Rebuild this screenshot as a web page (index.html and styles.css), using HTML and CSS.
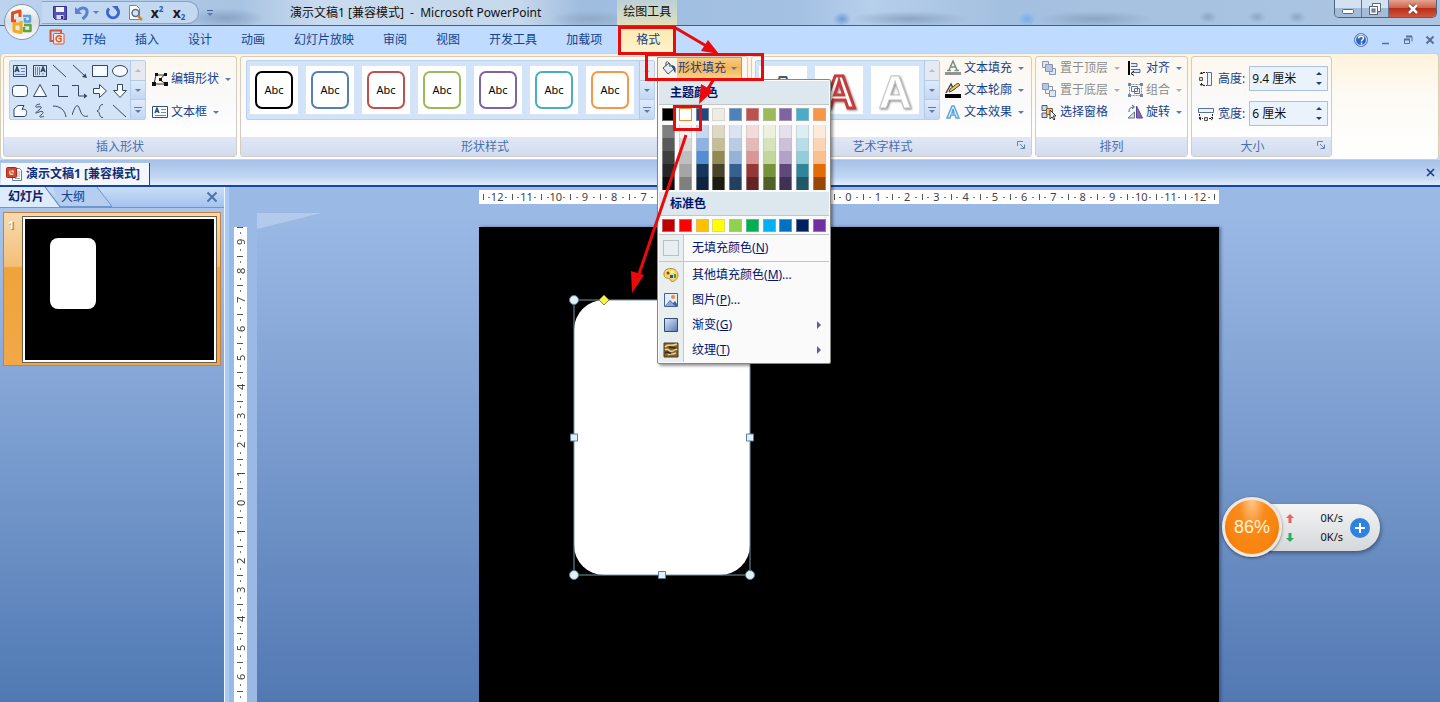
FILE: index.html
```html
<!DOCTYPE html>
<html lang="zh-CN">
<head>
    <meta charset="UTF-8">
    <meta name="viewport" content="width=device-width, initial-scale=1.0">
    <title>演示文稿1 [兼容模式] - Microsoft PowerPoint</title>
    <link rel="stylesheet" href="styles.css">
</head>
<body>
    <header class="titlebar">
        <button class="office-btn" aria-label="Office">
            <svg width="38" height="38" viewBox="0 0 38 38">
                <defs>
                    <linearGradient id="orb" x1="0" y1="0" x2="0" y2="1"><stop offset="0" stop-color="#fff"/><stop offset=".5" stop-color="#d9dee6"/><stop offset="1" stop-color="#fbfcfd"/></linearGradient>
                </defs>
                <circle cx="19" cy="19" r="17.500" fill="url(#orb)" stroke="#8793a8"/>
                <g fill="none" stroke-width="3" stroke-linejoin="round">
                    <path d="M13 18H9.500V10l7.500-2v6" stroke="#e2501a"/>
                    <path d="M20 13h7v5.500h-5V15" stroke="#5b9fdc" stroke-width="2.500"/>
                    <path d="M18 21h-7v7l7 1.500V18" stroke="#f0ac1c"/>
                    <path d="M21 22h6.500v6H21v-4" stroke="#5fa53a" stroke-width="2.500"/>
                </g>
            </svg>
        </button>
        <div class="quick-access">
            <button aria-label="保存"><svg width="16" height="16" viewBox="0 0 16 16"><path d="M1.500 1.500h13v13h-11l-2-2z" fill="#5650b8" stroke="#35308c"/><path d="M4 2h8v5H4z" fill="#f2f4ff"/><path d="M4.500 10h7v4.500h-7z" fill="#d5dcf4"/><path d="M9 11h2v3H9z" fill="#35308c"/></svg></button>
            <button class="undo" aria-label="撤销"><svg width="16" height="16" viewBox="0 0 16 16"><path d="M4 5.500C8 1 14 3 13 8c-.5 3-2.500 4.500-4.500 6" fill="none" stroke="#5c80d4" stroke-width="3"/><path d="M1 2v7h7z" fill="#5c80d4"/></svg><i class="caret"></i></button>
            <button aria-label="重复"><svg width="16" height="16" viewBox="0 0 16 16"><path d="M4 3.500a5.500 5.500 0 1 0 8 0" fill="none" stroke="#3a67cc" stroke-width="3"/><path d="M7 1h6v6z" fill="#3a67cc"/></svg></button>
            <button aria-label="打印预览"><svg width="16" height="16" viewBox="0 0 16 16"><path d="M2.500.500h7l3 3v11h-10z" fill="#fff" stroke="#7b8694"/><circle cx="8.500" cy="8" r="3.500" fill="#cde5f8" stroke="#5b6b7c" stroke-width="1.500"/><path d="M11 11l4 4" stroke="#c98a2c" stroke-width="2.500"/></svg></button>
            <button class="script-btn">x<sup>2</sup></button>
            <button class="script-btn">x<sub>2</sub></button>
        </div>
        <button class="qat-more" aria-label="自定义快速访问工具栏"><i class="caret"></i></button>
        <h1>演示文稿1 [兼容模式] &nbsp;-&nbsp; Microsoft PowerPoint</h1>
        <span class="context-title">绘图工具</span>
        <div class="window-controls">
            <button aria-label="最小化"><svg width="14" height="12" viewBox="0 0 14 12"><rect x="1.500" y="6.500" width="11" height="4" rx="1" fill="#fff" stroke="#5b6678"/></svg></button>
            <button aria-label="还原"><svg width="14" height="12" viewBox="0 0 14 12"><path d="M4.500.500h8v8h-8z" fill="#fff" stroke="#5b6678"/><rect x="1.500" y="3.500" width="8" height="8" fill="#fff" stroke="#5b6678"/><rect x="4" y="6" width="3" height="3" fill="#8a9bb2" stroke="#5b6678"/></svg></button>
            <button class="close" aria-label="关闭"><svg width="14" height="12" viewBox="0 0 14 12"><path d="M3 2l8 8M11 2l-8 8" stroke="#7a3129" stroke-width="4"/><path d="M3 2l8 8M11 2l-8 8" stroke="#fff" stroke-width="2.500"/></svg></button>
        </div>
    </header>

    <nav class="tabs">
        <svg class="ppt-icon" width="16" height="16" viewBox="0 0 16 16"><path d="M1 1.500h11v3M1.500 1v11h3" fill="none" stroke="#d9572f" stroke-width="2"/><rect x="4.500" y="4.500" width="10.500" height="10.500" rx="1" fill="#fbe6de" stroke="#d9572f"/><path d="M12.500 8A3 3 0 1 0 12 12V9.500H9.500" fill="none" stroke="#d9572f" stroke-width="1.500"/></svg>
        <a href="#">开始</a>
        <a href="#">插入</a>
        <a href="#">设计</a>
        <a href="#">动画</a>
        <a href="#">幻灯片放映</a>
        <a href="#">审阅</a>
        <a href="#">视图</a>
        <a href="#">开发工具</a>
        <a href="#">加载项</a>
        <a href="#" class="active">格式</a>
        <div class="tab-tools">
            <button aria-label="帮助"><svg width="16" height="16" viewBox="0 0 16 16"><circle cx="8" cy="8" r="6.500" fill="#2c66c4" stroke="#5f7fb6"/><circle cx="8" cy="8" r="5.500" fill="none" stroke="#dce9fb"/><path d="M5.500 6.500C5.500 3.500 10.500 3.500 10.500 6c0 1.500-2 1.500-2 3.500M8.500 10.500v2" fill="none" stroke="#fff" stroke-width="1.500"/></svg></button>
            <button aria-label="最小化文档"><svg width="10" height="10" viewBox="0 0 10 10"><path d="M1 8.500h7" stroke="#5a6f92" stroke-width="1.500"/></svg></button>
            <button aria-label="还原文档"><svg width="10" height="10" viewBox="0 0 10 10"><path d="M3 1.500h6v5M1.500 4.500h5v4h-5z" fill="none" stroke="#5a6f92"/><path d="M3 1.500h6M1 4.500h6" stroke="#5a6f92" stroke-width="2"/></svg></button>
            <button aria-label="关闭文档"><svg width="10" height="10" viewBox="0 0 10 10"><path d="M1.500 1.500l7 7M8.500 1.500l-7 7" stroke="#5a6f92" stroke-width="2"/></svg></button>
        </div>
    </nav>

    <section class="ribbon">
        <div class="group insert-shapes">
            <div class="group-body">
                <div class="gallery">
                    <div class="shape-grid">
                        <button aria-label="文本框"><svg viewBox="0 0 16 16"><path d="M1.500 2.500h13v11h-13z"/><path d="M3 9l2-5 2 5M4 7.500h2" stroke-width="1.500"/><path d="M9 5.500h4M9 8.500h4M3 11.500h10" class="soft"/></svg></button>
                        <button aria-label="竖排文本框"><svg viewBox="0 0 16 16"><path d="M1.500 2.500h13v11h-13z"/><path d="M9 9l2-5 2 5M10 7.500h2" stroke-width="1.500"/><path d="M3.500 4v8M5.500 4v8M7.500 4v8M11 10v2" class="soft"/></svg></button>
                        <button aria-label="直线"><svg viewBox="0 0 16 16"><path d="M1 2l13 12"/></svg></button>
                        <button aria-label="箭头"><svg viewBox="0 0 16 16"><path d="M1 2l13 12"/><path d="M15 15l-1.500-4.500L10 14z" class="solid"/></svg></button>
                        <button aria-label="矩形"><svg viewBox="0 0 16 16"><path d="M.500 2.500h15v11H.500z" class="fill"/></svg></button>
                        <button aria-label="椭圆"><svg viewBox="0 0 16 16"><ellipse cx="8" cy="8" rx="7.500" ry="5.500" class="fill"/></svg></button>
                        <button aria-label="圆角矩形"><svg viewBox="0 0 16 16"><rect x=".5" y="2.500" width="15" height="11" rx="3" class="fill"/></svg></button>
                        <button aria-label="三角形"><svg viewBox="0 0 16 16"><path d="M8 1.500l6.500 12h-13z" class="fill"/></svg></button>
                        <button aria-label="肘形连接符"><svg viewBox="0 0 16 16"><path d="M0 2.500h6.500v11H16"/></svg></button>
                        <button aria-label="肘形箭头"><svg viewBox="0 0 16 16"><path d="M0 2.500h6.500v10.500H13"/><path d="M12 10.500l3.500 2.500-3.500 2.500z" class="solid"/></svg></button>
                        <button aria-label="右箭头"><svg viewBox="0 0 16 16"><path d="M1.500 5.500h6v-4l7 6.500-7 6.500v-4h-6z" class="fill"/></svg></button>
                        <button aria-label="下箭头"><svg viewBox="0 0 16 16"><path d="M5.500 1.500v6h-4l6.500 7 6.500-7h-4v-6z" class="fill"/></svg></button>
                        <button aria-label="任意多边形"><svg viewBox="0 0 16 16"><path d="M2 13.500V6l4-3.500h6l-2 4c4-1 5 1 4.500 4S13 13.500 12 13.500z" class="fill"/></svg></button>
                        <button aria-label="自由曲线"><svg viewBox="0 0 16 16"><path d="M8 1C2 2 3 5 6 4s5 0 1 3-5 4 0 2 5 1 2 3 0 3 3 1"/></svg></button>
                        <button aria-label="弧形"><svg viewBox="0 0 16 16"><path d="M1 3c7 0 12 4 13 11"/></svg></button>
                        <button aria-label="曲线"><svg viewBox="0 0 16 16"><path d="M0 12C4 0 6 1 8 7s4 7 8 6"/></svg></button>
                        <button aria-label="左大括号"><svg viewBox="0 0 16 16"><path d="M11 1.500C6 1.500 9 7 5 8c4 1 1 6.500 6 6.500"/></svg></button>
                        <button aria-label="线条"><svg viewBox="0 0 16 16"><path d="M1 2l13 12"/></svg></button>
                    </div>
                    <div class="scroller"><button disabled aria-label="上一行"><i class="caret up"></i></button><button aria-label="下一行"><i class="caret"></i></button><button class="more" aria-label="其他"><i class="caret"></i></button></div>
                </div>
                <div class="commands loose">
                    <button class="cmd"><svg width="16" height="16" viewBox="0 0 16 16"><path d="M4 4h8L8 9l6 4H2z" fill="none" stroke="#333"/><path d="M3 2h3v3H3zM12 2h3v3h-3zM7 7h3v3H7zM0 11h4v4H0zM12 11h4v4h-4z" fill="#111"/></svg>编辑形状<i class="caret"></i></button>
                    <button class="cmd"><svg width="16" height="16" viewBox="0 0 16 16" fill="none" stroke="#33507c"><path d="M.500 2.500h15v11H.500z" fill="#fff"/><path d="M3 9l2-5 2 5M4 7.500h2" stroke-width="1.500"/><path d="M9 5.500h5M9 8.500h5M3 11.500h11" stroke="#6d87ae"/></svg>文本框<i class="caret"></i></button>
                </div>
            </div>
            <h2>插入形状</h2>
        </div>

        <div class="group shape-styles">
            <div class="group-body">
                <div class="gallery">
                    <div class="style-list">
                        <button class="style-item black">Abc</button>
                        <button class="style-item blue">Abc</button>
                        <button class="style-item red">Abc</button>
                        <button class="style-item green">Abc</button>
                        <button class="style-item purple">Abc</button>
                        <button class="style-item aqua">Abc</button>
                        <button class="style-item orange">Abc</button>
                    </div>
                    <div class="scroller"><button disabled aria-label="上一行"><i class="caret up"></i></button><button aria-label="下一行"><i class="caret"></i></button><button class="more" aria-label="其他"><i class="caret"></i></button></div>
                </div>
                <div class="fill-drop">
                    <button class="fill-btn">
                        <svg width="16" height="16" viewBox="0 0 16 16"><path d="M2 8l6-5 5 6-6 5z" fill="#e7edf5" stroke="#44546c"/><path d="M5 6c-1-6 3-6 4 1" fill="none" stroke="#44546c"/><path d="M10 5c5 0 5 4 4.500 8-2-1-1.500-4-3-5z" fill="#2c5088"/></svg>
                        <span>形状填充<i class="caret"></i></span>
                    </button>
                    <div class="color-menu">
                        <h3>主题颜色</h3>
                        <div class="theme-colors">
                            <div class="tone t-black"><button></button><button></button><button></button><button></button><button></button><button></button></div>
                            <div class="tone t-white"><button></button><button></button><button></button><button></button><button></button><button></button></div>
                            <div class="tone t-navy"><button></button><button></button><button></button><button></button><button></button><button></button></div>
                            <div class="tone t-tan"><button></button><button></button><button></button><button></button><button></button><button></button></div>
                            <div class="tone t-blue"><button></button><button></button><button></button><button></button><button></button><button></button></div>
                            <div class="tone t-red"><button></button><button></button><button></button><button></button><button></button><button></button></div>
                            <div class="tone t-green"><button></button><button></button><button></button><button></button><button></button><button></button></div>
                            <div class="tone t-purple"><button></button><button></button><button></button><button></button><button></button><button></button></div>
                            <div class="tone t-aqua"><button></button><button></button><button></button><button></button><button></button><button></button></div>
                            <div class="tone t-orange"><button></button><button></button><button></button><button></button><button></button><button></button></div>
                        </div>
                        <h3>标准色</h3>
                        <div class="standard-colors"><button></button><button></button><button></button><button></button><button></button><button></button><button></button><button></button><button></button><button></button></div>
                        <div class="menu-items">
                            <button class="menu-item no-fill"><i class="empty-box"></i><span>无填充颜色(<u>N</u>)</span></button>
                            <button class="menu-item"><svg width="16" height="16" viewBox="0 0 16 16"><path d="M8 1.500c4 0 7 3 7 6.500S12 14.500 9 14.500c-2 0-1-3-3-3S1 11 1 7s3-5.500 7-5.500z" fill="#f7d768" stroke="#b88a2a"/><circle cx="5" cy="6" r="1.500" fill="#7b4c20"/><circle cx="9" cy="5" r="1.500" fill="#fff6c8"/><path d="M7 8h3v3H7z" fill="#2a52b0"/><path d="M11 7h2v4h-2z" fill="#3a9a3d"/></svg><span>其他填充颜色(<u>M</u>)...</span></button>
                            <button class="menu-item"><svg width="16" height="16" viewBox="0 0 16 16"><path d="M1.500 1.500h13v13h-13z" fill="#e4eefb" stroke="#46638f"/><path d="M2 14l5-6 3 3 2-2 2 3v2z" fill="#41659c"/><path d="M2 14l5-5 5 5z" fill="#8aa9d6"/><circle cx="10" cy="5" r="2" fill="#f08a3c"/></svg><span>图片(<u>P</u>)...</span></button>
                            <button class="menu-item"><svg width="16" height="16" viewBox="0 0 16 16"><defs><linearGradient id="grad" x1="0" y1="0" x2="1" y2="1"><stop offset="0" stop-color="#dcecff"/><stop offset="1" stop-color="#5877b0"/></linearGradient></defs><path d="M1.500 1.500h13v13h-13z" fill="url(#grad)" stroke="#34496f"/></svg><span>渐变(<u>G</u>)</span><i class="sub-arrow"></i></button>
                            <button class="menu-item"><svg width="16" height="16" viewBox="0 0 16 16"><path d="M1 1h14v14H1z" fill="#85632f" stroke="#4a3b24"/><path d="M2 5c3-4 6 0 12-3M2 8c3-3 5 3 8 1s3-2 4-1M5 13c2-2 4 0 8-2" fill="none" stroke="#e8d39a" stroke-width="1.500"/><path d="M2 11c3-3 4 1 6 0M6 5c2 1 5 0 7 1" fill="none" stroke="#3b2b16" stroke-width="1.500"/></svg><span>纹理(<u>T</u>)</span><i class="sub-arrow"></i></button>
                        </div>
                    </div>
                </div>
            </div>
            <h2>形状样式</h2>
        </div>

        <div class="group wordart">
            <div class="group-body">
                <div class="gallery">
                    <div class="style-list">
                        <button class="art-item"><svg width="48" height="48"><text x="24" y="38" class="art a-dark">A</text></svg></button>
                        <button class="art-item"><svg width="48" height="48"><text x="24" y="42" class="art a-red">A</text></svg></button>
                        <button class="art-item"><svg width="48" height="48"><text x="24" y="42" class="art a-white">A</text></svg></button>
                    </div>
                    <div class="scroller"><button disabled aria-label="上一行"><i class="caret up"></i></button><button aria-label="下一行"><i class="caret"></i></button><button class="more" aria-label="其他"><i class="caret"></i></button></div>
                </div>
                <div class="commands">
                    <button class="cmd"><svg width="16" height="16" viewBox="0 0 16 16"><path d="M4 10L8 1l4 9M5.500 7h5M2 10.500h4M9.500 10.500H14" fill="none" stroke="#7e8c87" stroke-width="1.500"/><path d="M0 12h16v3H0z" fill="#929292"/></svg>文本填充<i class="caret"></i></button>
                    <button class="cmd"><svg width="16" height="16" viewBox="0 0 16 16"><path d="M1 11l5-9 3 6" fill="none" stroke="#444" stroke-width="1.500"/><path d="M4 10l1-3 8-6 2 2-8 6z" fill="#e9c469" stroke="#5c4926"/><path d="M0 12h16v4H0z" fill="#000"/></svg>文本轮廓<i class="caret"></i></button>
                    <button class="cmd"><svg width="16" height="16" viewBox="0 0 16 16"><path d="M2 14L7 2h2l5 12h-3l-1-3H6l-1 3zM7 9h2L8 5z" fill="#e9f5ff" stroke="#5da3df" stroke-width="1.500"/></svg>文本效果<i class="caret"></i></button>
                </div>
            </div>
            <h2>艺术字样式</h2>
            <button class="launcher" aria-label="艺术字样式选项"><svg width="10" height="10" viewBox="0 0 10 10"><path d="M1.500 6V1.500H7M4 4l4 4M8.500 4.500v4h-4" fill="none" stroke="#6682a8"/></svg></button>
        </div>

        <div class="group arrange">
            <div class="group-body">
                <div class="commands">
                    <button class="cmd" disabled><svg width="16" height="16" viewBox="0 0 16 16" stroke="#8995b0"><path d="M1.500 1.500h6v6h-6z" fill="#dfe5f1"/><path d="M8.500 8.500h6v6h-6z" fill="#dfe5f1"/><path d="M4.500 4.500h7v7h-7z" fill="#b5c6e6"/></svg>置于顶层<i class="caret"></i></button>
                    <button class="cmd" disabled><svg width="16" height="16" viewBox="0 0 16 16" stroke="#8995b0"><path d="M4.500 4.500h7v7h-7z" fill="#eef1f7"/><path d="M1.500 1.500h6v6h-6z" fill="#b5c6e6"/><path d="M8.500 8.500h6v6h-6z" fill="#dfe5f1"/></svg>置于底层<i class="caret"></i></button>
                    <button class="cmd"><svg width="16" height="16" viewBox="0 0 16 16"><path d="M1 1.500h5v5H1zM1 9h5v4.500H1z" fill="#cfd9ea" stroke="#4a5a74"/><path d="M5.500 4.500h6v6h-6z" fill="#f2c76c" stroke="#7d6332"/><path d="M9 6l6 6h-3l2 3-1 1-2-3-2 2z" fill="#fff" stroke="#333"/></svg>选择窗格</button>
                </div>
                <div class="commands">
                    <button class="cmd"><svg width="16" height="16" viewBox="0 0 16 16"><path d="M2 1v14" stroke="#000" stroke-width="2"/><path d="M4 3.500h6v3H4M4 9.500h9v3H6" fill="#dce6f5" stroke="#516c96"/><path d="M7 11l-3 2.500 3 2" fill="none" stroke="#000"/></svg>对齐<i class="caret"></i></button>
                    <button class="cmd" disabled><svg width="16" height="16" viewBox="0 0 16 16"><path d="M2.500 2.500h12v11h-12z" fill="none" stroke="#8090a8" stroke-dasharray="2 1"/><path d="M4.500 4.500h6v5h-6zM7.500 6.500h5v5h-5z" fill="none" stroke="#63758f"/><path d="M1 1h3v3H1zM13 1h3v3h-3zM1 12h3v3H1zM13 12h3v3h-3z" fill="#74859e"/></svg>组合<i class="caret"></i></button>
                    <button class="cmd"><svg width="16" height="16" viewBox="0 0 16 16"><path d="M9.500 14V2l6 12z" fill="#8069b5" stroke="#5a478d"/><path d="M7.500 14V8L1 14z" fill="#dce1ec" stroke="#66708a"/><path d="M2 8c0-4 2-5 5-5M5 1l2.500 2L5 5" fill="none" stroke="#3e62a0"/></svg>旋转<i class="caret"></i></button>
                </div>
            </div>
            <h2>排列</h2>
        </div>

        <div class="group size">
            <div class="group-body">
                <div class="size-row">
                    <svg width="16" height="16" viewBox="0 0 16 16"><path d="M9.500 1.500h4v13h-4z" fill="#edf3fb" stroke="#5b7096"/><path d="M3.500 1v3M2 3l1.500-2L5 3M3.500 12v3M2 13l1.500 2L5 13M5 1.500h4M5 14.500h4" fill="none" stroke="#222" stroke-dasharray="2 1"/><path d="M1.500 6.500h3v3h-3z" fill="#d7dce4" stroke="#555"/></svg>
                    <label for="shape-height">高度:</label>
                    <div class="spin"><input id="shape-height" type="text" value="9.4 厘米"><div><button aria-label="增加高度"><i class="caret up"></i></button><button aria-label="减小高度"><i class="caret"></i></button></div></div>
                </div>
                <div class="size-row">
                    <svg width="16" height="16" viewBox="0 0 16 16"><path d="M.500 2.500h15v4H.500z" fill="#edf3fb" stroke="#5b7096"/><path d="M1.500 8v6M14.500 8v6M1 12.500h4M3 11l-2 1.500L3 14M11 12.500h4M13 11l2 1.500-2 1.500" fill="none" stroke="#222" stroke-dasharray="2 1"/><path d="M6.500 11.500h3v3h-3z" fill="#d7dce4" stroke="#555"/></svg>
                    <label for="shape-width">宽度:</label>
                    <div class="spin"><input id="shape-width" type="text" value="6 厘米"><div><button aria-label="增加宽度"><i class="caret up"></i></button><button aria-label="减小宽度"><i class="caret"></i></button></div></div>
                </div>
            </div>
            <h2>大小</h2>
            <button class="launcher" aria-label="大小选项"><svg width="10" height="10" viewBox="0 0 10 10"><path d="M1.500 6V1.500H7M4 4l4 4M8.500 4.500v4h-4" fill="none" stroke="#6682a8"/></svg></button>
        </div>
    </section>

    <div class="doc-bar">
        <a href="#" class="doc-tab">
            <svg width="16" height="16" viewBox="0 0 16 16"><path d="M6.500 2.500h7l2 2v10h-9z" fill="#fff" stroke="#6a7f9f"/><path d="M11 6h3M11 8h3M11 10h3M9 12.500h5" stroke="#8aa"/><rect x=".5" y="1.500" width="10" height="10" rx="1" fill="#d4442c" stroke="#a02d1c"/><rect x="3" y="4" width="5" height="5" rx="2" fill="#f6d5cd"/><path d="M5 4v3h3" fill="none" stroke="#c03a25"/></svg>
            演示文稿1 [兼容模式]
        </a>
        <button class="doc-close" aria-label="关闭"><svg width="9" height="9" viewBox="0 0 9 9"><path d="M1 1l7 7M8 1L1 8" stroke="#123a86" stroke-width="1.500"/></svg></button>
    </div>

    <main class="workspace">
        <aside class="slides-panel">
            <div class="panel-tabs">
                <svg class="tab-shape" width="112" height="20" viewBox="0 0 112 20"><path d="M53 0h44l15 19.500H60z" fill="#b5cef0"/><path d="M97 0l15 19.500H60L45 0" fill="none" stroke="#6f95cd"/><path d="M0 0h45l15 20H0z" fill="#dcebfd"/><path d="M45 0l15 20" stroke="#5f86c2"/></svg>
                <button class="current">幻灯片</button>
                <button>大纲</button>
                <button class="panel-close" aria-label="关闭窗格"><svg width="12" height="12" viewBox="0 0 12 12"><path d="M1.500 1.500l9 9M10.500 1.500l-9 9" stroke="#4d73ad" stroke-width="2"/></svg></button>
            </div>
            <div class="thumb-item">
                <span>1</span>
                <div class="thumb"><div class="thumb-shape"></div></div>
            </div>
        </aside>
        <div class="splitter"></div>
        <div class="editor">
            <div class="h-ruler"><span>12</span><span>11</span><span>10</span><span>9</span><span>8</span><span>7</span><span>6</span><span>5</span><span>4</span><span>3</span><span>2</span><span>1</span><span>0</span><span>1</span><span>2</span><span>3</span><span>4</span><span>5</span><span>6</span><span>7</span><span>8</span><span>9</span><span>10</span><span>11</span><span>12</span></div>
            <div class="v-ruler"><span>9</span><span>8</span><span>7</span><span>6</span><span>5</span><span>4</span><span>3</span><span>2</span><span>1</span><span>0</span><span>1</span><span>2</span><span>3</span><span>4</span><span>5</span><span>6</span><span class="blank"></span></div>
            <div class="stage">
                <svg class="corner" width="64" height="16" viewBox="0 0 64 16"><path d="M0 0h64L0 16z" fill="#b3caec"/></svg>
                <div class="slide">
                    <div class="shape">
                        <svg width="188" height="288" viewBox="-6 -6 188 288">
                            <path d="M0 0h176v275H0z" fill="none" stroke="#7797ad"/>
                            <g fill="#dff1f5" stroke="#5d7f92">
                                <circle cx="0" cy="0" r="4.500"/><circle cx="176" cy="0" r="4.500"/><circle cx="0" cy="275" r="4.500"/><circle cx="176" cy="275" r="4.500"/>
                                <path d="M-3.500 134h7v7h-7zM172.500 134h7v7h-7zM84.500 271.500h7v7h-7zM84.500-3.500h7v7h-7z"/>
                            </g>
                            <path d="M30-5l5 5-5 5-5-5z" fill="#f8f04e" stroke="#8c8530"/>
                        </svg>
                    </div>
                </div>
            </div>
        </div>
    </main>

    <div class="net-widget">
        <div class="percent">86%</div>
        <div class="rates">
            <p><svg width="8" height="9" viewBox="0 0 8 9"><path d="M4 0l4 4H5.500v5h-3V4H0z" fill="#e8635a"/></svg>0K/s</p>
            <p><svg width="8" height="9" viewBox="0 0 8 9"><path d="M4 9l4-4H5.500V0h-3v5H0z" fill="#2fae5a"/></svg>0K/s</p>
        </div>
        <button aria-label="展开"><svg width="20" height="20" viewBox="0 0 20 20"><circle cx="10" cy="10" r="10" fill="#2f83e0"/><path d="M10 5v10M5 10h10" stroke="#fff" stroke-width="2"/></svg></button>
    </div>

    <!-- step-by-step hints -->
    <svg class="hints" width="800" height="310" viewBox="0 0 800 310">
        <g fill="none" stroke="#e90b0b" stroke-width="3">
            <path d="M619.500 27.500h55v26h-55z"/>
            <path d="M646.500 54.500h116v25h-116z"/>
            <path d="M674.500 106.500h26v23h-26z"/>
            <path d="M674 27l34 20M714 79l-7 11M686 135l-49 145"/>
        </g>
        <path d="M719 54l-18-3 7-11zM699 104l2-20 12 7zM632 293l-1-22 13 4z" fill="#e90b0b"/>
    </svg>
</body>
</html>
```

FILE: styles.css
```css
* {
    box-sizing: border-box;
}
body {
    margin: 0;
    height: 100vh;
    display: flex;
    flex-direction: column;
    position: relative;
    overflow: hidden;
    font-family: "Noto Sans", "Noto Sans CJK SC", sans-serif;
    font-size: 12px;
    line-height: 16px;
    color: #15428b;
    background: #bfdbff;
}
h1, h2, h3, p {
    margin: 0;
    font-size: 12px;
    font-weight: normal;
}
button {
    display: flex;
    align-items: center;
    justify-content: center;
    padding: 0;
    border: none;
    background: none;
    font: inherit;
    color: inherit;
}
svg {
    display: block;
    flex: none;
}
a {
    color: inherit;
    text-decoration: none;
}
.caret {
    flex: none;
    border: 3px solid transparent;
    border-top-color: #5b7cad;
    border-bottom: none;
}
.caret.up {
    border-top: none;
    border-bottom: 3px solid #5b7cad;
}

/* title bar */
.titlebar {
    flex: none;
    height: 26px;
    display: flex;
    align-items: center;
    padding-left: 42px;
    border-bottom: 1px solid #46617f;
    background:
        radial-gradient(ellipse 9px 7px at 842px 19px, #6d9bd6, transparent),
        radial-gradient(ellipse 60px 8px at 910px 19px, #8ba5c4, transparent),
        radial-gradient(ellipse 9px 7px at 1027px 19px, #74aeee, transparent),
        radial-gradient(ellipse 60px 8px at 1095px 19px, #8ba5c4, transparent),
        radial-gradient(ellipse 9px 6px at 1208px 17px, #8ba5c4, transparent),
        radial-gradient(ellipse 9px 6px at 1257px 17px, #8ba5c4, transparent),
        radial-gradient(ellipse 9px 6px at 1297px 17px, #8ba5c4, transparent),
        radial-gradient(ellipse 40px 10px at 225px 18px, #87a3c6, transparent),
        radial-gradient(ellipse 40px 8px at 590px 19px, #90a9c6, transparent),
        linear-gradient(90deg, #bdd3ee 0, #a8c3e2 240px, #c9dbee 320px, #c6d8ec 520px, #9fbddf 580px, #a4c1e3 800px, #b6cfeb 870px, #a4c0e0 1000px, #abc5e2 100%);
}
.office-btn {
    position: absolute;
    left: 3px;
    top: 3px;
    z-index: 2;
}
.quick-access {
    display: flex;
    align-items: center;
    gap: 6px;
    height: 23px;
    padding: 0 11px 0 10px;
    border: 1px solid #8ba3c6;
    border-left: none;
    border-radius: 0 12px 12px 0;
    background: #c3d8f1;
}
.quick-access .undo {
    gap: 3px;
}
.script-btn {
    width: 16px;
    font-weight: bold;
    font-size: 14px;
    color: #1b1b1b;
}
.script-btn sup, .script-btn sub {
    font-size: 8px;
    line-height: 8px;
    color: #2e5aa8;
}
.script-btn sup {
    align-self: flex-start;
}
.script-btn sub {
    align-self: flex-end;
}
.qat-more {
    margin-left: 8px;
    padding-top: 2px;
    border-top: 1px solid #3d5f92;
}
.titlebar h1 {
    margin-left: 77px;
    color: #111;
    white-space: nowrap;
}
.context-title {
    margin-left: 76px;
    padding: 4px 6px 5px;
    color: #111;
    background: linear-gradient(#bdd0d8, #e0e0b8);
    white-space: nowrap;
}
.window-controls {
    display: flex;
    align-self: flex-start;
    margin-left: auto;
    margin-right: 3px;
    border: 1px solid #4d6384;
    border-top: none;
    border-radius: 0 0 5px 5px;
    overflow: hidden;
}
.window-controls button {
    width: 27px;
    height: 17px;
    border-right: 1px solid #5f7697;
    background: linear-gradient(#d3e1f1 50%, #a4bcd8 50%);
}
.window-controls .close {
    width: 47px;
    border-right: none;
    background: linear-gradient(#e3a493, #cf5c44 50%, #b9301a 50%, #d2553a);
}

/* tab row */
.tabs {
    flex: none;
    height: 27px;
    display: flex;
    align-items: center;
    gap: 1px;
    padding: 0 5px 0 49px;
    background: #bfdbff;
}
.tabs a {
    padding: 5px 14px;
    white-space: nowrap;
}
.ppt-icon {
    align-self: flex-start;
    margin: 3px 2px 0 0;
}
.tabs .active {
    margin-left: 4px;
    padding: 5px 15px;
    border-radius: 3px 3px 0 0;
    background: linear-gradient(#fbe9ae, #fdf3cf);
}
.tab-tools {
    display: flex;
    align-items: center;
    gap: 12px;
    margin-left: auto;
}

/* ribbon */
.ribbon {
    flex: none;
    display: flex;
    gap: 3px;
    margin-right: 1px;
    padding: 2px;
    border: 1px solid #d8cfb5;
    border-radius: 4px;
    background: linear-gradient(#fff3dc, #fdfaf5 40%, #fff);
}
.group {
    position: relative;
    display: flex;
    flex-direction: column;
    border: 1px solid #d2cdc0;
    border-radius: 3px;
    background: linear-gradient(#fdf8ee, #fafafc 50%, #fff 80%);
}
.group-body {
    flex: 1;
    display: flex;
    align-items: flex-start;
    min-height: 80px;
    padding: 3px 5px 0;
}
.group h2 {
    height: 19px;
    line-height: 19px;
    text-align: center;
    color: #4a70aa;
    background: linear-gradient(#e1e7f4, #d2dcf0);
}
.insert-shapes {
    flex: 0 0 234px;
}
.shape-styles {
    flex: 0 0 507px;
}
.wordart {
    flex: 0 0 281px;
}
.arrange {
    flex: 0 0 152px;
}
.size {
    flex: 0 0 141px;
}
.shape-styles h2, .wordart h2, .size h2 {
    padding-right: 18px;
}
.launcher {
    position: absolute;
    right: 5px;
    bottom: 6px;
}
.gallery {
    display: flex;
    height: 60px;
    border: 1px solid #b9d0ed;
    border-radius: 2px;
    background: #d4e4f8;
}
.shape-grid {
    display: grid;
    grid-template-columns: repeat(6, 20px);
    grid-auto-rows: 20px;
}
.shape-grid svg {
    width: 16px;
    height: 16px;
    fill: none;
    stroke: #33475f;
}
.shape-grid .fill {
    fill: #f7faff;
}
.shape-grid .solid {
    fill: #33475f;
    stroke: none;
}
.shape-grid .soft {
    stroke: #6d87ae;
}
.scroller {
    width: 15px;
    display: flex;
    flex-direction: column;
}
.scroller button {
    flex: 1;
    border: 1px solid #b1c9ea;
    border-width: 0 0 1px 1px;
    background: linear-gradient(#dfebfb, #c2d7f3);
}
.scroller button:disabled {
    background: #e6e9f0;
}
.scroller button:disabled .caret {
    border-bottom-color: #b5bccb;
}
.scroller .more {
    flex-direction: column;
    gap: 2px;
    border-bottom: none;
}
.scroller .more::before {
    content: "";
    width: 8px;
    height: 1px;
    background: #5b7cad;
}
.commands {
    display: flex;
    flex-direction: column;
}
.cmd {
    justify-content: flex-start;
    gap: 3px;
    height: 22px;
    white-space: nowrap;
}
.cmd .caret {
    margin-left: 3px;
}
.cmd:disabled {
    color: #8d8d8d;
}
.cmd:disabled .caret {
    border-top-color: #b0b0b0;
}
.loose {
    gap: 11px;
    margin-left: 6px;
    padding-top: 8px;
}
.style-list {
    display: flex;
    gap: 8px;
    padding: 5px 5px 5px 3px;
}
.style-item {
    position: relative;
    width: 48px;
    height: 48px;
    border: 5px solid #fff;
    background: #fff;
    color: #000;
    font-size: 11px;
}
.style-item::before {
    content: "";
    position: absolute;
    inset: 0;
    border: 2px solid #000;
    border-radius: 7px;
}
.style-item.blue::before { border-color: #5580b5; }
.style-item.red::before { border-color: #c0504d; }
.style-item.green::before { border-color: #9bbb59; }
.style-item.purple::before { border-color: #8064a2; }
.style-item.aqua::before { border-color: #4bacc6; }
.style-item.orange::before { border-color: #f79646; }
.art-item {
    width: 48px;
    height: 48px;
    background: #fff;
}
.art-item svg {
    overflow: visible;
}
.art {
    font-family: "Liberation Sans", sans-serif;
    font-weight: bold;
    font-size: 46px;
    text-anchor: middle;
    fill: #fff;
}
.a-dark {
    font-size: 38px;
    stroke: #4e5866;
    stroke-width: 2px;
}
.a-red {
    stroke: #c63c3c;
    stroke-width: 3px;
    filter: drop-shadow(1px 1px 1px #888);
}
.a-white {
    stroke: #c4c4c4;
    stroke-width: 1px;
    filter: drop-shadow(1px 1px 1px #888);
}
.wordart .group-body, .arrange .group-body {
    gap: 5px;
}
.wordart .group-body {
    padding-left: 3px;
}
.wordart .commands, .arrange .commands {
    margin-top: -3px;
}
.arrange .commands + .commands {
    margin-left: 2px;
}
.size .group-body {
    flex-direction: column;
    gap: 10px;
    padding: 9px 3px 0 6px;
}
.size-row {
    display: flex;
    align-items: center;
    gap: 4px;
    width: 100%;
}
.spin {
    display: flex;
    flex: 1;
    height: 25px;
    border: 1px solid #a9c3e6;
    background: #eaf2fb;
}
.spin input {
    flex: 1;
    width: 0;
    padding: 0 2px;
    border: none;
    background: none;
    font: inherit;
    color: #111;
}
.spin div {
    display: flex;
    flex-direction: column;
    width: 17px;
    padding: 2px 0;
}
.spin button {
    flex: 1;
}
.spin .caret {
    border-top-color: #23406e;
    border-bottom-color: #23406e;
}

/* fill drop-down */
.fill-drop {
    position: relative;
    margin: -3px 0 0 2px;
}
.fill-btn {
    height: 22px;
    padding-left: 3px;
    border: 1px solid #b99a5c;
    background: #faf4e6;
    white-space: nowrap;
}
.fill-btn span {
    display: flex;
    align-items: center;
    gap: 5px;
    height: 20px;
    padding: 0 4px 0 1px;
    background: linear-gradient(#f5cd8a, #f4b453 50%, #fbd384);
}
.color-menu {
    position: absolute;
    left: 0;
    top: 22px;
    z-index: 5;
    width: 174px;
    padding: 1px;
    border: 1px solid #868686;
    border-radius: 2px;
    background: #fafafa;
    color: #00156e;
    box-shadow: 2px 2px 3px rgba(0, 0, 0, 0.4);
}
.color-menu h3 {
    height: 24px;
    padding-left: 11px;
    line-height: 23px;
    font-weight: bold;
    border-bottom: 1px solid #c5c5c5;
    background: #dde7ee;
}
.theme-colors, .standard-colors {
    display: flex;
    justify-content: space-between;
    padding: 3px 3px 2px;
}
.tone button, .standard-colors button {
    width: 13px;
    height: 13px;
    border: 1px solid rgba(190, 190, 190, 0.5);
}
.tone button:nth-child(1) {
    margin-bottom: 4px;
    background: var(--base);
}
.tone button:nth-child(n+2) {
    border-width: 0 1px;
}
.tone button:nth-child(2) { background: var(--s1); }
.tone button:nth-child(3) { background: var(--s2); }
.tone button:nth-child(4) { background: var(--s3); }
.tone button:nth-child(5) { background: var(--s4); }
.tone button:nth-child(6) { background: var(--s5); }
.t-black { --base: #000; --s1: #7f7f7f; --s2: #595959; --s3: #3f3f3f; --s4: #262626; --s5: #0c0c0c; }
.t-white { --base: #fff; --s1: #f2f2f2; --s2: #d8d8d8; --s3: #bfbfbf; --s4: #a5a5a5; --s5: #7f7f7f; }
.t-navy { --base: #1f497d; --s1: #c6d9f0; --s2: #8db3e2; --s3: #548dd4; --s4: #17365d; --s5: #0f243e; }
.t-tan { --base: #eeece1; --s1: #ddd9c3; --s2: #c4bd97; --s3: #938953; --s4: #494429; --s5: #1d1b10; }
.t-blue { --base: #4f81bd; --s1: #dbe5f1; --s2: #b8cce4; --s3: #95b3d7; --s4: #366092; --s5: #244061; }
.t-red { --base: #c0504d; --s1: #f2dcdb; --s2: #e5b9b7; --s3: #d99694; --s4: #953734; --s5: #632423; }
.t-green { --base: #9bbb59; --s1: #ebf1dd; --s2: #d7e3bc; --s3: #c3d69b; --s4: #76923c; --s5: #4f6128; }
.t-purple { --base: #8064a2; --s1: #e5e0ec; --s2: #ccc1d9; --s3: #b2a2c7; --s4: #5f497a; --s5: #3f3151; }
.t-aqua { --base: #4bacc6; --s1: #dbeef3; --s2: #b7dde8; --s3: #92cddc; --s4: #31859b; --s5: #205867; }
.t-orange { --base: #f79646; --s1: #fdeada; --s2: #fbd5b5; --s3: #fac08f; --s4: #e36c09; --s5: #974806; }
.t-white button:nth-child(1) {
    border: 1px solid #ee8a2c;
}
.standard-colors button:nth-child(1) { background: #c00000; }
.standard-colors button:nth-child(2) { background: #ff0000; }
.standard-colors button:nth-child(3) { background: #ffc000; }
.standard-colors button:nth-child(4) { background: #ffff00; }
.standard-colors button:nth-child(5) { background: #92d050; }
.standard-colors button:nth-child(6) { background: #00b050; }
.standard-colors button:nth-child(7) { background: #00b0f0; }
.standard-colors button:nth-child(8) { background: #0070c0; }
.standard-colors button:nth-child(9) { background: #002060; }
.standard-colors button:nth-child(10) { background: #7030a0; }
.menu-items {
    border-top: 1px solid #c5c5c5;
    background: linear-gradient(90deg, #e9eeee 24px, #c5c5c5 24px, #c5c5c5 25px, #fafafa 25px);
}
.menu-item {
    width: 100%;
    height: 25px;
    justify-content: flex-start;
    gap: 13px;
    padding: 0 8px 0 4px;
}
.menu-item.no-fill {
    height: 27px;
    border-bottom: 1px solid #c5c5c5;
}
.empty-box {
    width: 16px;
    height: 16px;
    border: 1px solid #b4c1c8;
    background: #e9eef1;
}
.sub-arrow {
    margin-left: auto;
    border: 4px solid transparent;
    border-left-color: #5d5cab;
    border-right: none;
}

/* document tab */
.doc-bar {
    flex: none;
    height: 27px;
    display: flex;
    align-items: flex-end;
    justify-content: space-between;
    border-bottom: 2px solid #1646a0;
    background: linear-gradient(#a5c0e8, #c3d7f3 70%, #e2edfb);
}
.doc-tab {
    display: flex;
    align-items: center;
    gap: 4px;
    height: 22px;
    margin-left: 1px;
    padding: 0 9px 0 5px;
    border-right: 1px solid #1646a0;
    background: #f3f6fc;
    font-weight: bold;
    color: #0d2f77;
    white-space: nowrap;
}
.doc-close {
    align-self: center;
    margin-right: 5px;
}

/* workspace */
.workspace {
    flex: 1;
    display: flex;
    min-height: 0;
}
.slides-panel {
    flex: 0 0 224px;
    background: linear-gradient(#aecaf0, #87a8d8 35%, #5079b3);
}
.panel-tabs {
    position: relative;
    display: flex;
    align-items: center;
    height: 21px;
    padding: 0 6px 0 8px;
    border-bottom: 1px solid #6f95cd;
    background: linear-gradient(#c9ddf7, #a4c3ee);
    color: #123c86;
}
.panel-tabs button {
    position: relative;
    margin-right: 17px;
}
.panel-tabs .current {
    font-weight: bold;
    color: #0d2160;
}
.panel-tabs .panel-close {
    margin: 0 0 0 auto;
}
.tab-shape {
    position: absolute;
    left: 0;
    top: 0;
}
.thumb-item {
    display: flex;
    justify-content: space-between;
    margin: 4px 3px 0;
    padding: 4px 4px 3px 4px;
    border: 1px solid #c98140;
    background: linear-gradient(#f7dab0, #f3bf77 35%, #efa33a 36%, #f1a848);
    color: #fff;
    font-size: 11px;
    font-weight: bold;
    text-shadow: 1px 1px 1px #6d5c46;
}
.thumb {
    width: 193px;
    height: 145px;
    padding: 19px 25px;
    border: 2px solid #fff;
    outline: 1px solid #6d5c46;
    background: #000;
}
.thumb-shape {
    width: 46px;
    height: 71px;
    border-radius: 8px;
    background: #fff;
}
.splitter {
    flex: 0 0 5px;
    border-left: 1px solid #f1f7ff;
    background: #a8caf3;
}
.editor {
    flex: 1;
    display: grid;
    grid-template-columns: 13px 1fr;
    grid-template-rows: 14px 1fr;
    gap: 9px 10px;
    padding: 3px 0 0 5px;
    min-width: 0;
    background: #9bb9e5;
}
.h-ruler {
    grid-column: 2;
    justify-self: center;
    display: flex;
    width: 100%;
    max-width: 740px;
    padding: 0 4px;
    background: #fff;
}
.h-ruler span, .v-ruler span {
    flex: 1;
    font-size: 11px;
    line-height: 14px;
    text-align: center;
    color: #444;
    background:
        linear-gradient(#555, #555) 0 4px / 1px 6px no-repeat,
        linear-gradient(#777, #777) 20% 7px / 2px 1px no-repeat,
        linear-gradient(#777, #777) 82% 7px / 2px 1px no-repeat;
}
.h-ruler {
    background: linear-gradient(#555, #555) calc(100% - 4px) 4px / 1px 6px no-repeat #fff;
}
.v-ruler {
    display: flex;
    flex-direction: column;
    margin-top: 14px;
    background: #fff;
    overflow: hidden;
}
.v-ruler span {
    flex: 0 0 29px;
    writing-mode: vertical-rl;
    transform: rotate(180deg);
    line-height: 13px;
    background:
        linear-gradient(#555, #555) 4px 100% / 6px 1px no-repeat,
        linear-gradient(#777, #777) 6px 20% / 1px 2px no-repeat,
        linear-gradient(#777, #777) 6px 82% / 1px 2px no-repeat;
}
.stage {
    position: relative;
    display: flex;
    justify-content: center;
    align-items: flex-start;
    padding-top: 14px;
    overflow: hidden;
    background: linear-gradient(#9bb9e5, #5379b3);
}
.corner {
    position: absolute;
    left: 0;
    top: 0;
}
.slide {
    position: relative;
    flex: 0 1 740px;
    aspect-ratio: 4 / 3;
    background: #000;
    box-shadow: 2px 0 3px rgba(30, 50, 90, 0.5);
}
.shape {
    position: absolute;
    left: 95px;
    top: 73px;
    width: 176px;
    height: 275px;
    border-radius: 30px;
    background: #fff;
}
.shape svg {
    position: absolute;
    left: -6px;
    top: -6px;
}

/* network speed widget */
.net-widget {
    position: absolute;
    right: 60px;
    top: 504px;
    display: flex;
    align-items: center;
    width: 130px;
    height: 47px;
    padding: 0 10px 0 36px;
    border-radius: 24px;
    background: linear-gradient(#f4f4f4, #d5d8db);
    box-shadow: 1px 2px 4px rgba(0, 0, 0, 0.4);
    color: #111;
}
.percent {
    position: absolute;
    left: -28px;
    top: -7px;
    width: 60px;
    height: 60px;
    border: 3px solid #f0e6dc;
    border-radius: 50%;
    background: radial-gradient(ellipse at 50% 5%, #ffc48a, #fb8a18 35%, #f9840f 70%, #d96a06);
    box-shadow: 0 1px 3px rgba(0, 0, 0, 0.5);
    font-family: "Liberation Sans", sans-serif;
    font-size: 18px;
    line-height: 54px;
    text-align: center;
    color: #fff3dc;
}
.rates {
    flex: 1;
}
.rates p {
    display: flex;
    align-items: center;
    justify-content: space-between;
    height: 19px;
    margin-right: 7px;
    font-size: 11px;
}
.hints {
    position: absolute;
    left: 0;
    top: 0;
    z-index: 9;
    pointer-events: none;
}
```
